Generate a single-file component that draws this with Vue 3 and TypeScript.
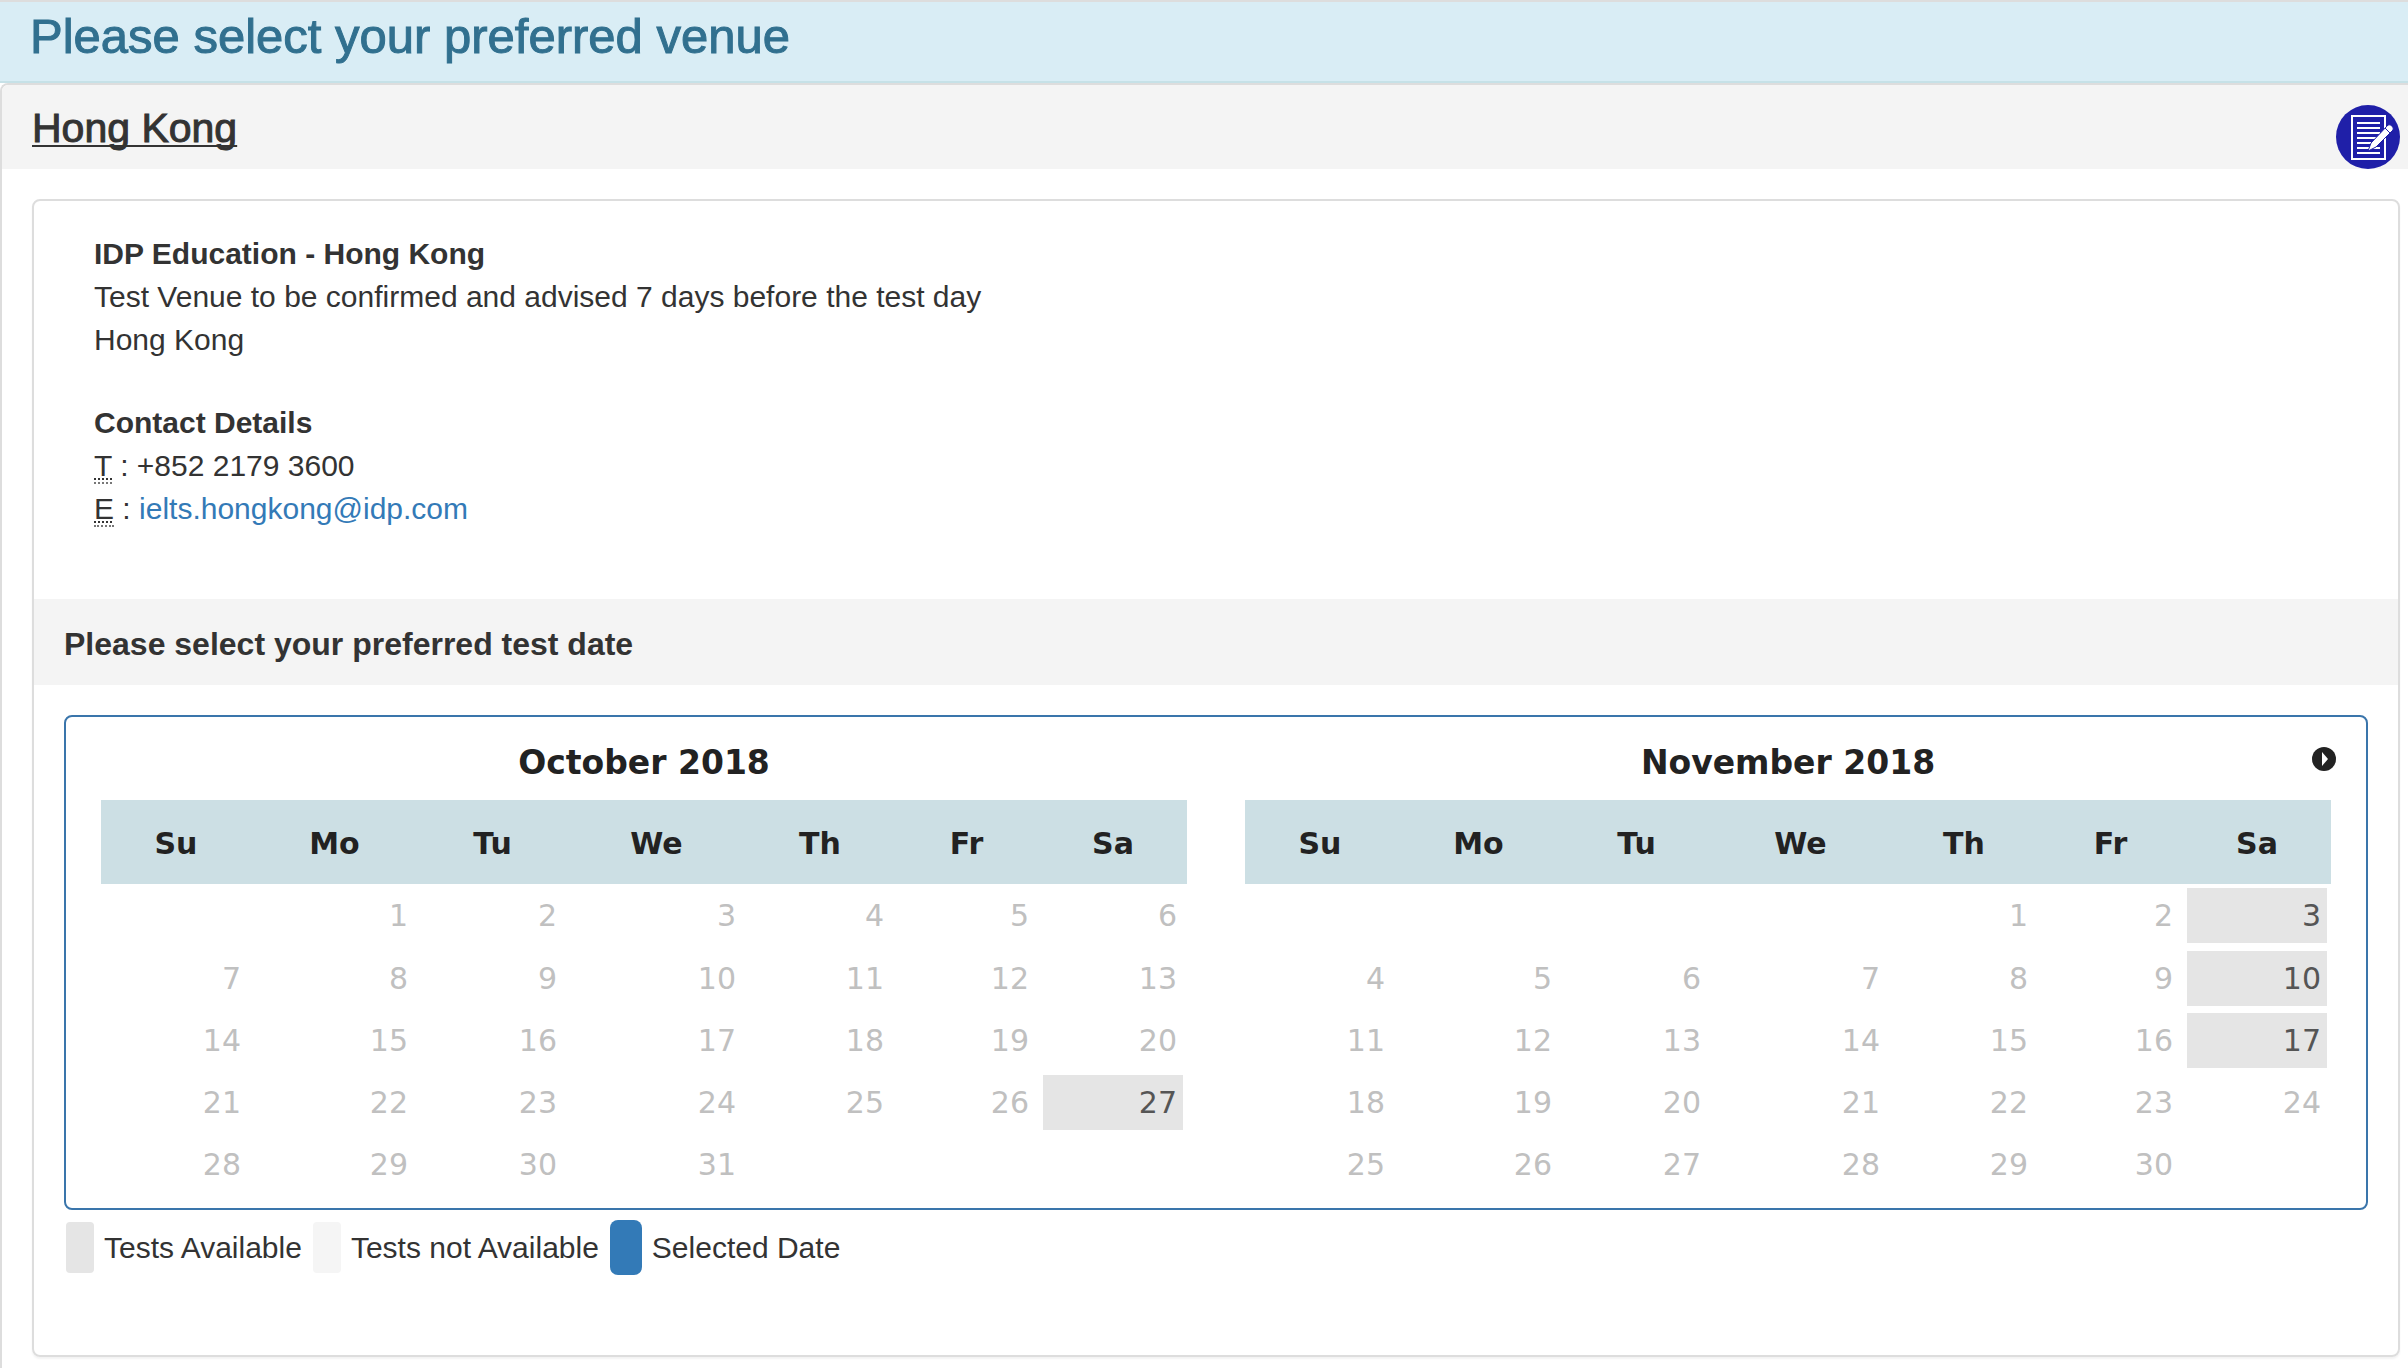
<script setup lang="ts">
interface Month {
  name: string
  offset: number
  days: number
  open: number[]
}

const weekdays = [
  { short: 'Su', full: 'Sunday' },
  { short: 'Mo', full: 'Monday' },
  { short: 'Tu', full: 'Tuesday' },
  { short: 'We', full: 'Wednesday' },
  { short: 'Th', full: 'Thursday' },
  { short: 'Fr', full: 'Friday' },
  { short: 'Sa', full: 'Saturday' },
]

const months: Month[] = [
  { name: 'October 2018', offset: 1, days: 31, open: [27] },
  { name: 'November 2018', offset: 4, days: 30, open: [3, 10, 17] },
]

// Weeks of a month; 0 stands for a blank cell.
function weeks(month: Month): number[][] {
  const rows: number[][] = []
  for (let start = 1 - month.offset; start <= month.days; start += 7) {
    rows.push(
      Array.from({ length: 7 }, (_, i) => {
        const day = start + i
        return day >= 1 && day <= month.days ? day : 0
      }),
    )
  }
  return rows
}
</script>

<template>
  <div class="page">
    <header class="banner">
      <h1>Please select your preferred venue</h1>
    </header>

    <main class="venue">
      <div class="venue-head">
        <h2><a href="#hong-kong">Hong Kong</a></h2>
        <button class="register" type="button" aria-label="Register">
          <svg viewBox="0 0 64 64" aria-hidden="true">
            <circle cx="32" cy="32" r="32" fill="#1f1fa8" />
            <rect x="16" y="11" width="33" height="43" fill="none" stroke="#fff" stroke-width="2" />
            <path
              d="M21 18h23M21 23h23M21 28h23M21 33h23M21 38h23M21 43h23M21 48h23"
              stroke="#fff"
              stroke-width="2"
            />
            <path
              d="M32 46l3-8L52 20q2-1 4 1t1 4L40 42z"
              fill="#fff"
              stroke="#1f1fa8"
              stroke-width="1"
            />
            <path d="M49 23l5 5" stroke="#1f1fa8" stroke-width="1" />
          </svg>
        </button>
      </div>

      <section id="hong-kong" class="card">
        <div class="details">
          <address>
            <strong>IDP Education - Hong Kong</strong><br />
            Test Venue to be confirmed and advised 7 days before the test day<br />
            Hong Kong
          </address>
          <address>
            <strong>Contact Details</strong><br />
            <abbr>T</abbr> : +852 2179 3600<br />
            <abbr>E</abbr> : <a href="mailto:ielts.hongkong@idp.com">ielts.hongkong@idp.com</a>
          </address>
        </div>

        <h3>Please select your preferred test date</h3>

        <div class="calendar">
          <div v-for="(month, m) in months" :key="month.name" class="month">
            <div class="month-title">
              <span :id="'month-' + m">{{ month.name }}</span>
              <button v-if="m === months.length - 1" class="next" type="button" aria-label="Next">
                <svg viewBox="0 0 24 24" aria-hidden="true">
                  <circle cx="12" cy="12" r="12" fill="#222" />
                  <path d="M10 5v14l6-7z" fill="#fff" />
                </svg>
              </button>
            </div>
            <table :aria-labelledby="'month-' + m">
              <thead>
                <tr>
                  <th v-for="d in weekdays" :key="d.short" scope="col" :class="d.short" :aria-label="d.full">
                    {{ d.short }}
                  </th>
                </tr>
              </thead>
              <tbody>
                <tr v-for="(week, w) in weeks(month)" :key="w">
                  <td v-for="(day, i) in week" :key="i">
                    <a v-if="month.open.includes(day)" class="day open" href="#">{{ day }}</a>
                    <span v-else-if="day" class="day">{{ day }}</span>
                  </td>
                </tr>
              </tbody>
            </table>
          </div>
        </div>

        <ul class="legend">
          <li><span class="swatch available"></span>Tests Available</li>
          <li><span class="swatch unavailable"></span>Tests not Available</li>
          <li><span class="swatch selected"></span>Selected Date</li>
        </ul>
      </section>
    </main>
  </div>
</template>

<style>
body {
  margin: 0;
  background: #fff;
}
</style>

<style scoped>
* {
  box-sizing: border-box;
}

.page {
  display: flex;
  flex-direction: column;
  min-height: 100vh;
  overflow: hidden;
  font-family: 'Liberation Sans', Arial, sans-serif;
  font-size: 30px;
  line-height: 43px;
  color: #333;
}

.banner {
  padding: 8px 30px 18px;
  border-top: 2px solid #ddd;
  border-bottom: 2px solid #c6e1e7;
  background: #d9edf5;
}

h1 {
  margin: 0;
  font-size: 49px;
  line-height: 53px;
  font-weight: 400;
  color: #31708f;
  -webkit-text-stroke: 1px currentColor;
}

.venue {
  flex: 1;
  padding-bottom: 11px;
  border-top: 2px solid #ddd;
  border-left: 2px solid #ddd;
  border-top-left-radius: 8px;
}

.venue-head {
  display: flex;
  align-items: flex-start;
  justify-content: space-between;
  padding: 20px 8px 0 30px;
  height: 84px;
  border-top-left-radius: 6px;
  background: #f4f4f4;
}

h2 {
  margin: 0;
  font-size: 41px;
  line-height: 46px;
  font-weight: 400;
  -webkit-text-stroke: 1px currentColor;
}

h2 a {
  color: inherit;
  text-decoration-thickness: 2px;
  text-underline-offset: 3px;
  text-decoration-skip-ink: none;
}

.register {
  width: 64px;
  height: 64px;
  padding: 0;
  border: 0;
  border-radius: 50%;
  background: none;
}

.register svg,
.next svg {
  display: block;
  width: 100%;
  height: 100%;
}

.card {
  margin: 30px 8px 0 30px;
  padding-bottom: 80px;
  border: 2px solid #ddd;
  border-radius: 8px;
  box-shadow: 0 2px 2px rgba(0, 0, 0, 0.05);
}

.details {
  padding: 31px 60px 29px;
}

address {
  margin-bottom: 40px;
  font-style: normal;
}

abbr {
  border-bottom: 2px dotted #777;
  background: linear-gradient(90deg, #333 50%, transparent 50%) left bottom 2px / 4px 2px repeat-x;
}

.details a {
  color: #337ab7;
  text-decoration: none;
}

h3 {
  margin: 0;
  padding: 22px 30px 18px;
  font-size: 32px;
  line-height: 46px;
  font-weight: 700;
  background: #f4f4f4;
}

.calendar {
  display: flex;
  gap: 58px;
  margin: 30px 30px 0;
  padding: 20px 35px 13px;
  border: 2px solid #3a75ab;
  border-radius: 8px;
  font-family: 'DejaVu Sans', Verdana, sans-serif;
  color: #222;
}

.month {
  flex: 1;
}

.month-title {
  position: relative;
  height: 63px;
  font-size: 33px;
  line-height: 52px;
  font-weight: 700;
  text-align: center;
}

.next {
  position: absolute;
  top: 10px;
  right: -5px;
  width: 24px;
  height: 24px;
  padding: 0;
  border: 0;
  background: none;
}

table {
  width: 100%;
  table-layout: fixed;
  border-collapse: collapse;
}

th {
  height: 84px;
  padding: 2px 0 0;
  font-weight: 700;
  background: #ccdfe4;
}

.Su {
  width: 150px;
}

.Mo {
  width: 167px;
}

.Tu {
  width: 149px;
}

.We {
  width: 179px;
}

.Th,
.Sa {
  width: 148px;
}

.Fr {
  width: 145px;
}

td {
  height: 62px;
  padding: 4px 4px 3px;
  vertical-align: top;
}

tr:first-child td {
  height: 63px;
}

.day {
  display: block;
  padding: 0 6px;
  line-height: 55px;
  text-align: right;
  color: #c0c0c0;
}

.open {
  color: #555;
  background: #e5e5e5;
  text-decoration: none;
}

.legend {
  display: flex;
  gap: 11px;
  margin: 10px 30px 0;
  padding: 0 0 0 2px;
  list-style: none;
}

.legend li {
  display: flex;
  align-items: center;
  gap: 10px;
  height: 55px;
}

.swatch {
  width: 28px;
  height: 51px;
  border-radius: 4px;
}

.available {
  background: #e5e5e5;
}

.unavailable {
  background: #f5f5f5;
}

.selected {
  width: 32px;
  height: 55px;
  border-radius: 8px;
  background: #337ab7;
}
</style>
